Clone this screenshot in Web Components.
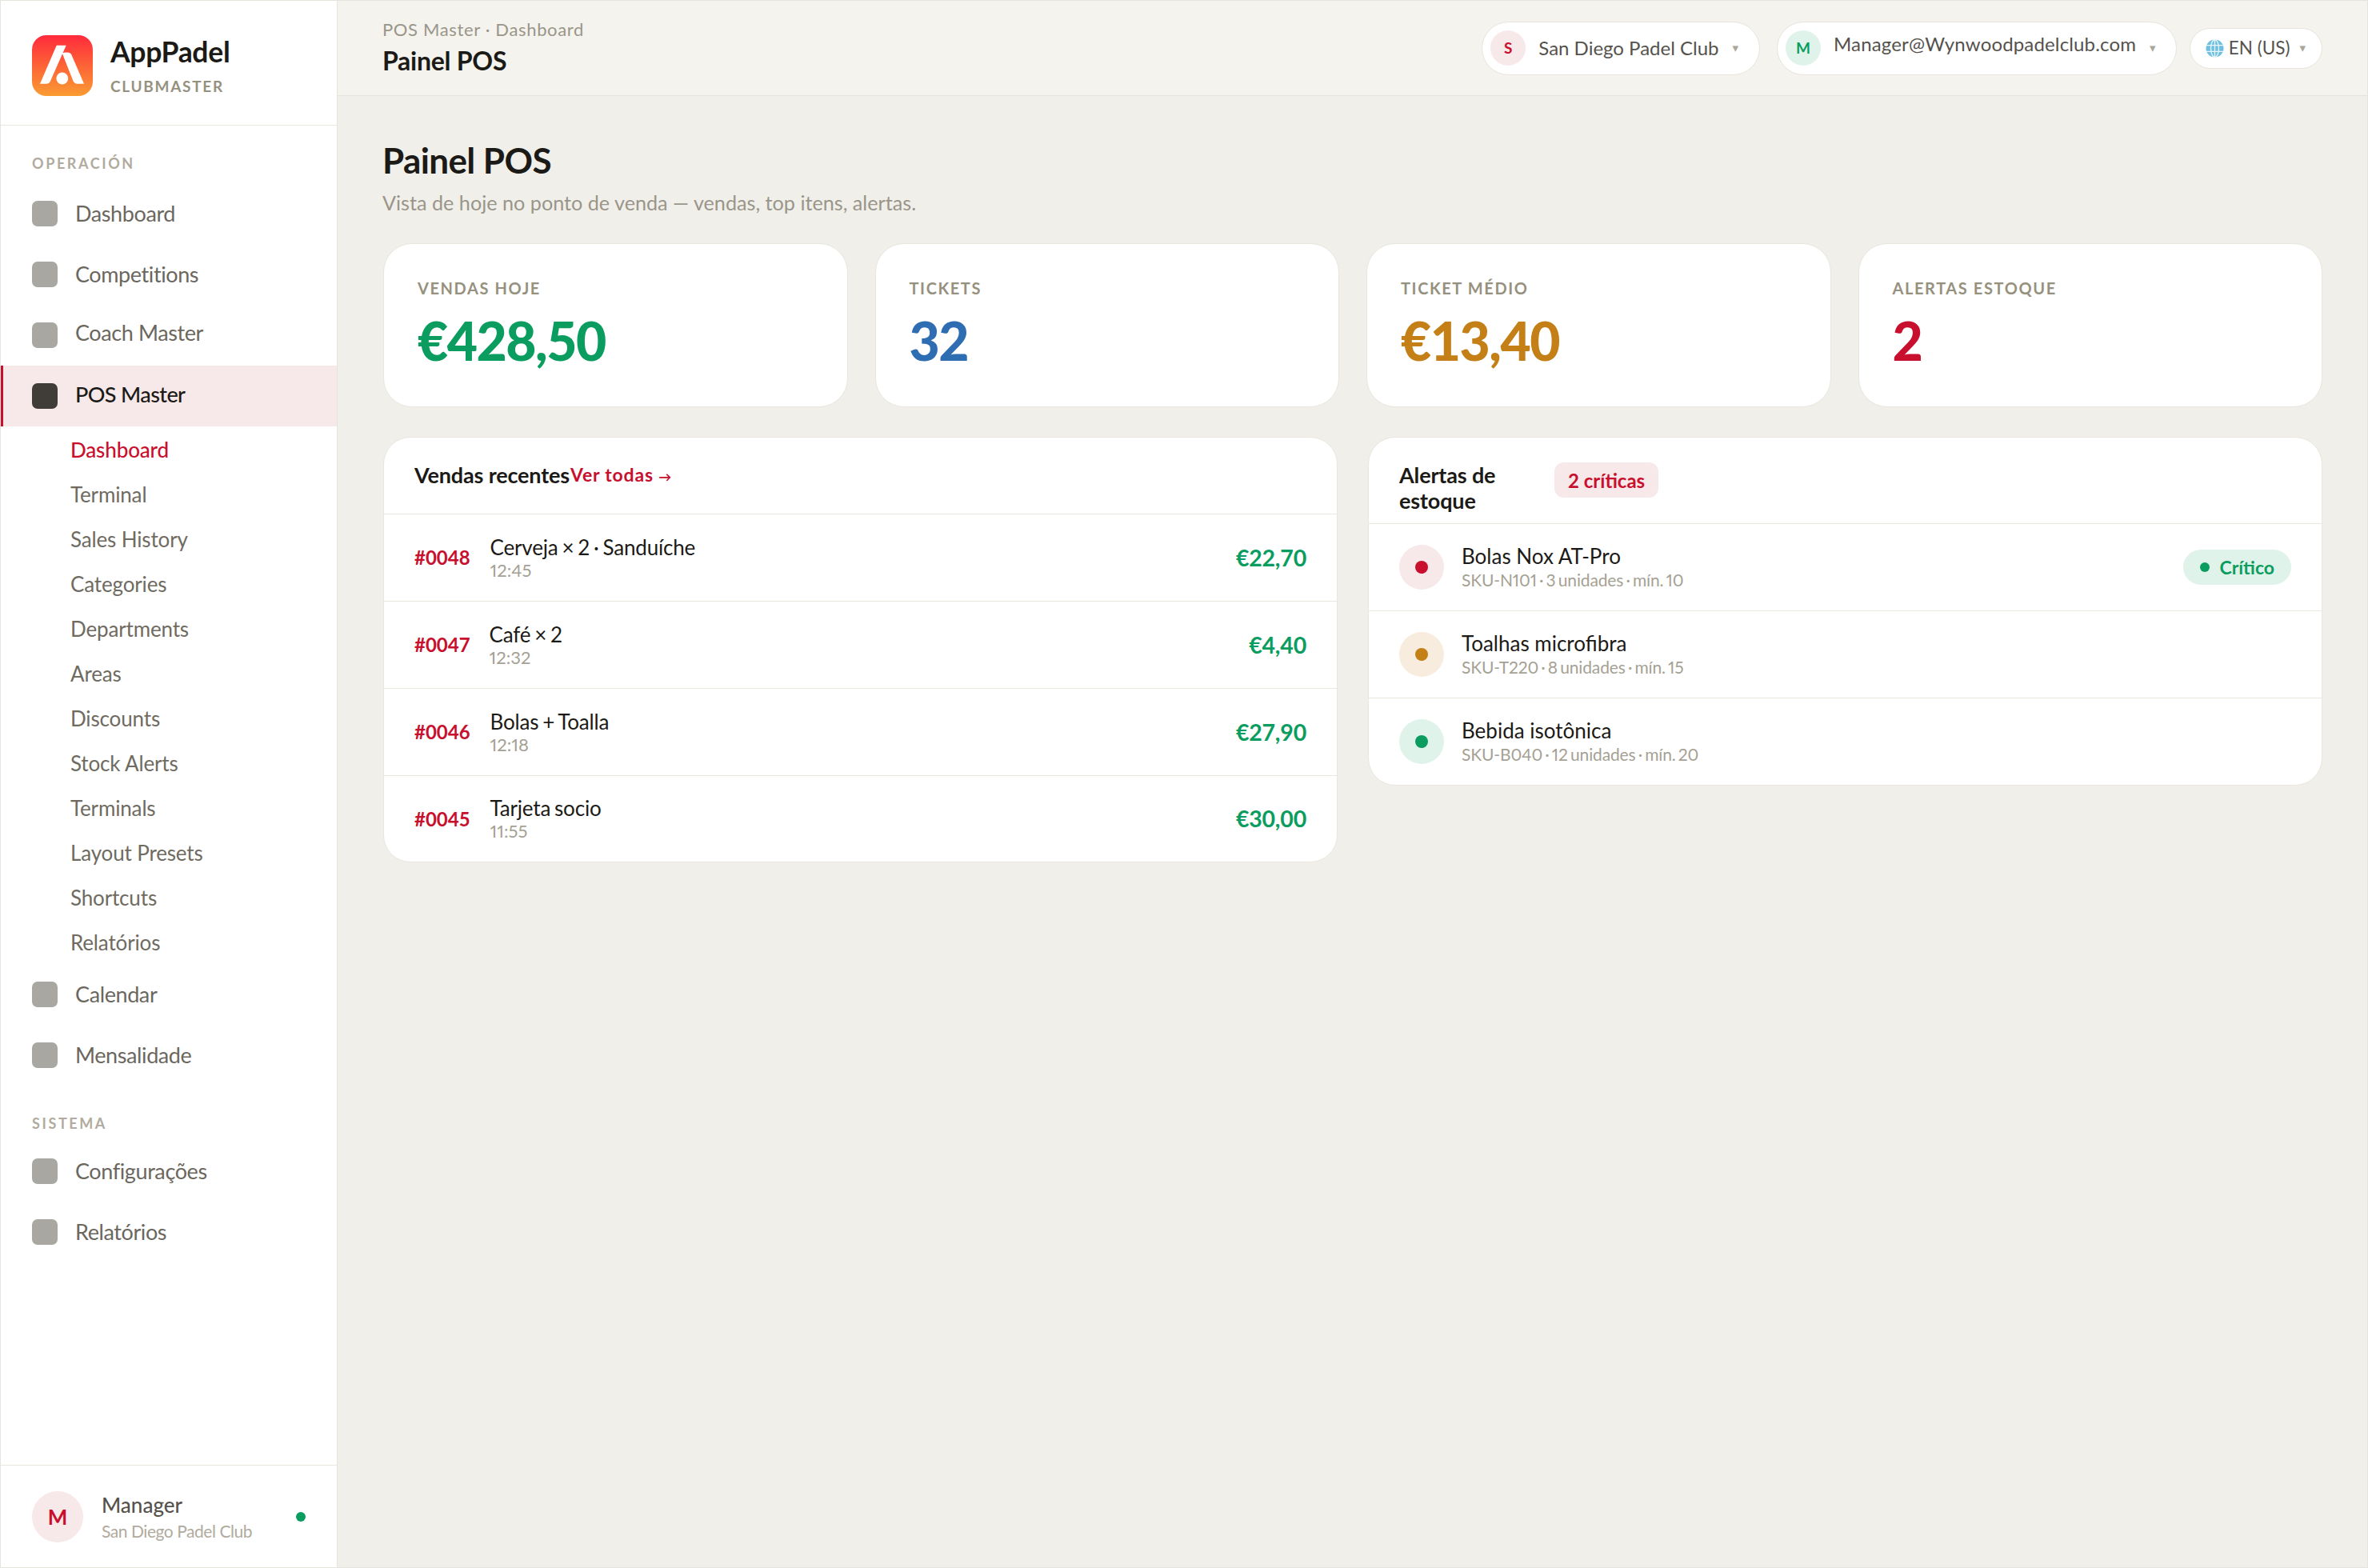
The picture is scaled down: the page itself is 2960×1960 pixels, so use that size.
<!DOCTYPE html>
<html lang="pt">
<head>
<meta charset="utf-8">
<title>Painel POS</title>
<style>
html,body{margin:0;padding:0;background:#f0efea;}
body{font-family:"Lato","Liberation Sans",sans-serif;color:#1c1a17;}
</style>
</head>
<body>
<script>
function def(name, css, html, extra){
  const tpl=document.createElement('template');
  tpl.innerHTML='<style>'+css+'</style>'+html;
  customElements.define(name,class extends HTMLElement{
    constructor(){super();this.attachShadow({mode:'open'}).appendChild(tpl.content.cloneNode(true));}
    connectedCallback(){ if(extra) extra(this,this.shadowRoot); }
  });
}

def('app-shell',`:host{display:grid;grid-template-columns:421px 1fr;width:2960px;height:1960px;box-sizing:border-box;border:1px solid #e6e4dc;background:#f0efea;overflow:hidden}
.col{display:flex;flex-direction:column;min-width:0}`,`<slot name="side"></slot><div class="col"><slot name="top"></slot><slot name="main"></slot></div>`);

def('side-bar',`:host{display:flex;flex-direction:column;background:#fff;border-right:1px solid #e6e4dc;height:1958px;box-sizing:content-box;width:420px}
.spacer{flex:1}`,`<slot name="brand"></slot><slot></slot><div class="spacer"></div><slot name="foot"></slot>`);

def('brand-block',`:host{display:flex;align-items:center;gap:22px;height:148px;box-sizing:content-box;padding:7px 0 0 39px;border-bottom:1px solid #e9e7e0}
svg{display:block;width:76px;height:76px;flex:none}
.t{display:flex;flex-direction:column}
.a{font-size:35.5px;font-weight:700;line-height:44px;letter-spacing:-.3px;color:#1c1a17}
.b{font-size:19px;font-weight:700;line-height:26px;letter-spacing:1.7px;color:#96917f;margin-top:8px}`,
`<svg viewBox="0 0 76 76"><defs><linearGradient id="g" x1="0" y1="0" x2="0" y2="1"><stop offset="0" stop-color="#ff2a3c"/><stop offset="1" stop-color="#fa9c32"/></linearGradient></defs>
<rect width="76" height="76" rx="18" fill="url(#g)"/>
<path d="M30.7 12.7H42.7L22.9 57.4Q21.4 60.7 17.6 60.7H10Z" fill="#fff"/>
<path d="M37.7 22.4Q40 21.4 44 21.5Q48 21.7 49.4 24.6L65 60.7H56.6Q53 60.7 51.6 57.6Z" fill="#fff"/>
<circle cx="37.8" cy="54" r="7.4" fill="#fff"/></svg>
<div class="t"><div class="a">AppPadel</div><div class="b">CLUBMASTER</div></div>`);

def('nav-label',`:host{display:block;box-sizing:border-box;padding:35px 0 var(--mb,13px) 39px;font-size:18px;font-weight:700;line-height:24px;letter-spacing:2.6px;color:#b0ab9e}`,`<slot></slot>`);

def('nav-item',`:host{display:flex;align-items:center;height:76px;box-sizing:border-box;padding-left:39px;font-size:27px;letter-spacing:-.4px;line-height:36px;color:#6b675e}
.i{width:32px;height:32px;border-radius:7px;background:#a9a7a1;flex:none;margin-right:22px}
.x{display:block;margin-bottom:var(--lift,0px)}
:host([active]){background:#f7e8e9;color:#1c1a17;font-weight:500;letter-spacing:-.6px;border-left:3px solid #c8102e;padding-left:36px;--lift:4px}
:host([active]) .i{background:#403c37}`,`<span class="i"></span><span class="x"><slot></slot></span>`);

def('sub-item',`:host{display:flex;align-items:center;height:56px;box-sizing:border-box;padding:2px 0 0 87px;font-size:26px;letter-spacing:-.15px;color:#6f6b61;line-height:34px}
:host([active]){color:#c8102e;font-weight:500}`,`<slot></slot>`);

def('user-foot',`:host{display:flex;align-items:center;height:127px;box-sizing:content-box;border-top:1px solid #e9e7e0;padding:0 39px 0 39px}
.av{width:64px;height:64px;border-radius:50%;background:#f7e8e9;color:#c8102e;font-weight:700;font-size:26px;display:flex;align-items:center;justify-content:center;flex:none;margin-right:23px}
.t{flex:1}
.n{font-size:26px;font-weight:500;line-height:34px;color:#55524d}
.s{font-size:21px;letter-spacing:-.45px;line-height:28px;color:#b0ab9e;margin-top:2px}
.d{width:12px;height:12px;border-radius:50%;background:#0a9d5f;flex:none}`,
`<div class="av">M</div><div class="t"><div class="n">Manager</div><div class="s">San Diego Padel Club</div></div><div class="d"></div>`);

def('top-bar',`:host{display:flex;align-items:center;justify-content:space-between;height:118px;box-sizing:content-box;background:#f4f3ee;border-bottom:1px solid #e6e4dc;padding:0 56px}
.c{font-size:22px;line-height:28px;color:#9a9589;letter-spacing:.65px}
.h{font-size:32px;line-height:42px;font-weight:700;color:#1c1a17;margin-top:4px;letter-spacing:-.25px}
.r{display:flex;align-items:center;gap:21px}`,
`<div><div class="c"><slot name="crumb"></slot></div><div class="h"><slot name="title"></slot></div></div><div class="r"><slot></slot></div>`);

def('top-pill',`:host{display:flex;align-items:center;height:67px;box-sizing:border-box;background:#fff;border:1px solid #e6e4dc;border-radius:34px;padding:0 10px;font-size:var(--fs,24px);letter-spacing:var(--ls,0);color:#55524d;line-height:30px}
:host([small]){height:51px;border-radius:26px;padding:0 12px 0 19px;margin-left:-5px}
.av{width:44px;height:44px;border-radius:50%;flex:none;display:flex;align-items:center;justify-content:center;font-size:19px;font-weight:700;letter-spacing:0;background:var(--abg);color:var(--afg);margin-right:16px}
.t{margin-bottom:var(--lift,0px);white-space:nowrap}
.ar{font-family:"DejaVu Sans",sans-serif;font-size:15px;color:#aaa699;margin:0 var(--arm,10px) 0 var(--arl,18px)}
slot[name=icon]{display:contents}`,
`<slot name="icon"></slot><span class="t"><slot></slot></span><span class="ar">▾</span>`,
(el,sr)=>{ if(el.hasAttribute('letter')){const d=document.createElement('div');d.className='av';d.textContent=el.getAttribute('letter');sr.insertBefore(d,sr.querySelector('slot[name=icon]'));}});

def('page-main',`:host{display:block;flex:1;box-sizing:border-box;padding:52px 56px 0 57px;background:#f0efea}
.h{font-size:44px;line-height:56px;font-weight:700;color:#1c1a17;letter-spacing:-.6px;margin-left:-1px}
.s{font-size:25.2px;line-height:32px;color:#9a9589;margin:9px 0 35px -1px}
.stats{display:grid;grid-template-columns:repeat(4,1fr);gap:34px;margin-bottom:37px}
.pan{display:grid;grid-template-columns:repeat(2,1fr);gap:38px;align-items:start}`,
`<div class="h"><slot name="h"></slot></div><div class="s"><slot name="s"></slot></div><div class="stats"><slot name="stat"></slot></div><div class="pan"><slot name="panel"></slot></div>`);

def('stat-card',`:host{display:block;height:205px;box-sizing:border-box;background:#fff;border:1px solid #e8e6de;border-radius:36px;padding:42px 42px 0 42px}
.l{font-size:20px;font-weight:700;line-height:26px;letter-spacing:1.6px;color:#96917f}
.v{font-size:66px;font-weight:900;line-height:70px;letter-spacing:-1.5px;margin-top:18px;color:var(--c)}`,
`<div class="l"></div><div class="v"></div>`,
(el,sr)=>{sr.querySelector('.l').textContent=el.getAttribute('label');sr.querySelector('.v').textContent=el.getAttribute('value');});

def('data-panel',`:host{display:block;background:#fff;border:1px solid #e8e6de;border-radius:34px;overflow:hidden}
.hd{display:flex;align-items:flex-start;box-sizing:border-box;padding:31px 38px 0 38px;height:var(--hh,96px);border-bottom:1px solid #e9e7e0}`,
`<div class="hd"><slot name="head"></slot></div><slot></slot>`);

def('panel-title',`:host{display:block;font-size:27px;font-weight:700;line-height:32px;color:#1c1a17;letter-spacing:-.15px}`,`<slot></slot>`);
def('panel-link',`:host{display:block;font-size:23px;font-weight:700;line-height:31px;color:#c8102e;letter-spacing:.8px;margin-left:1px}`,`<slot></slot>`);
def('crit-badge',`:host{display:flex;align-items:center;height:44px;box-sizing:border-box;padding:0 17px;border-radius:12px;background:#f7e8e9;color:#c8102e;font-size:24px;font-weight:700;white-space:nowrap}`,`<slot></slot>`);

def('sale-row',`:host{display:flex;align-items:center;height:109px;box-sizing:border-box;padding:0 38px;border-bottom:1px solid #e9e7e0}
:host([last]){border-bottom:0;height:107px}
.id{font-size:24px;font-weight:700;color:#c8102e;margin:0 var(--idm,25px) 1px 0}
.m{flex:1;margin-top:1px}
.n{font-size:26px;letter-spacing:-.2px;word-spacing:-1.5px;line-height:30px;color:#1c1a17}
.t{font-size:22px;line-height:28px;color:#a5a194;font-variant-numeric:proportional-nums}
.a{font-size:28.5px;font-weight:700;color:#0a9d5f;letter-spacing:-.2px;margin-bottom:1px}`,
`<span class="id"></span><div class="m"><div class="n"></div><div class="t"></div></div><span class="a"></span>`,
(el,sr)=>{sr.querySelector('.id').textContent=el.getAttribute('no');sr.querySelector('.n').textContent=el.getAttribute('name');sr.querySelector('.t').textContent=el.getAttribute('time');sr.querySelector('.a').textContent=el.getAttribute('amount');});

def('alert-row',`:host{display:flex;align-items:center;height:109px;box-sizing:border-box;padding:0 38px;border-bottom:1px solid #e9e7e0}
:host([last]){border-bottom:0;height:108px}
.ic{width:56px;height:56px;border-radius:50%;background:var(--bg);display:flex;align-items:center;justify-content:center;flex:none;margin-right:22px}
.ic i{display:block;width:16px;height:16px;border-radius:50%;background:var(--fg)}
.m{flex:1}
.n{font-size:26px;line-height:30px;color:#1c1a17}
.s{font-size:21px;letter-spacing:-.15px;word-spacing:-2px;line-height:28px;color:#a5a194;margin-top:1px;font-variant-numeric:proportional-nums}`,
`<div class="ic"><i></i></div><div class="m"><div class="n"></div><div class="s"></div></div><slot></slot>`,
(el,sr)=>{sr.querySelector('.n').textContent=el.getAttribute('name');sr.querySelector('.s').textContent=el.getAttribute('sub');});

def('status-chip',`:host{display:flex;align-items:center;height:44px;box-sizing:border-box;padding:0 21px;border-radius:22px;background:#e0f3ea;color:#0a9d5f;font-size:23px;font-weight:700}
i{display:block;width:12px;height:12px;border-radius:50%;background:#0a9d5f;margin-right:12px}`,`<i></i><slot></slot>`);
</script>

<app-shell>
  <side-bar slot="side">
    <brand-block slot="brand"></brand-block>
    <nav-label>OPERACIÓN</nav-label>
    <nav-item>Dashboard</nav-item>
    <nav-item>Competitions</nav-item>
    <nav-item style="--lift:7px">Coach Master</nav-item>
    <nav-item active>POS Master</nav-item>
    <sub-item active>Dashboard</sub-item>
    <sub-item>Terminal</sub-item>
    <sub-item>Sales History</sub-item>
    <sub-item>Categories</sub-item>
    <sub-item>Departments</sub-item>
    <sub-item>Areas</sub-item>
    <sub-item>Discounts</sub-item>
    <sub-item>Stock Alerts</sub-item>
    <sub-item>Terminals</sub-item>
    <sub-item>Layout Presets</sub-item>
    <sub-item>Shortcuts</sub-item>
    <sub-item>Relatórios</sub-item>
    <nav-item>Calendar</nav-item>
    <nav-item>Mensalidade</nav-item>
    <nav-label style="--mb:10px">SISTEMA</nav-label>
    <nav-item>Configurações</nav-item>
    <nav-item>Relatórios</nav-item>
    <user-foot slot="foot"></user-foot>
  </side-bar>

  <top-bar slot="top">
    <span slot="crumb">POS Master · Dashboard</span>
    <span slot="title">Painel POS</span>
    <top-pill letter="S" style="--abg:#f7e8e9;--afg:#c8102e;--arl:17px;--arm:16px">San Diego Padel Club</top-pill>
    <top-pill letter="M" style="--abg:#e0f3ea;--afg:#0a9d5f;--lift:10px;--ls:.15px;--arl:17px;--arm:15px">Manager@Wynwoodpadelclub.com</top-pill>
    <top-pill small style="--fs:22.5px;--arl:12px;--arm:8px">
      <svg slot="icon" width="23" height="23" viewBox="0 0 24 24" style="margin-right:6px;flex:none">
        <circle cx="12" cy="12" r="11.5" fill="#6fbfe0"/>
        <g fill="none" stroke="#e8f6fb" stroke-width="1.4">
          <ellipse cx="12" cy="12" rx="5.2" ry="11.5"/><path d="M12 .5V23.5M1 8H23M1 16H23"/>
        </g>
      </svg>
      EN (US)
    </top-pill>
  </top-bar>

  <page-main slot="main">
    <span slot="h">Painel POS</span>
    <span slot="s">Vista de hoje no ponto de venda — vendas, top itens, alertas.</span>
    <stat-card slot="stat" label="VENDAS HOJE" value="€428,50" style="--c:#0a9d5f"></stat-card>
    <stat-card slot="stat" label="TICKETS" value="32" style="--c:#2f6db3"></stat-card>
    <stat-card slot="stat" label="TICKET MÉDIO" value="€13,40" style="--c:#c47f17"></stat-card>
    <stat-card slot="stat" label="ALERTAS ESTOQUE" value="2" style="--c:#c8102e"></stat-card>

    <data-panel slot="panel">
      <panel-title slot="head">Vendas recentes</panel-title>
      <panel-link slot="head">Ver todas <span style="font-size:16px;letter-spacing:0">→</span></panel-link>
      <sale-row no="#0048" name="Cerveja × 2 · Sanduíche" time="12:45" amount="€22,70"></sale-row>
      <sale-row no="#0047" name="Café × 2" time="12:32" amount="€4,40" style="--idm:24px"></sale-row>
      <sale-row no="#0046" name="Bolas + Toalla" time="12:18" amount="€27,90"></sale-row>
      <sale-row last no="#0045" name="Tarjeta socio" time="11:55" amount="€30,00"></sale-row>
    </data-panel>

    <data-panel slot="panel" style="--hh:108px">
      <panel-title slot="head" style="width:194px">Alertas de estoque</panel-title>
      <crit-badge slot="head">2 críticas</crit-badge>
      <alert-row name="Bolas Nox AT-Pro" sub="SKU-N101 · 3 unidades · mín. 10" style="--bg:#f7e8e9;--fg:#c8102e"><status-chip>Crítico</status-chip></alert-row>
      <alert-row name="Toalhas microfibra" sub="SKU-T220 · 8 unidades · mín. 15" style="--bg:#f7ecdd;--fg:#c47f17"></alert-row>
      <alert-row last name="Bebida isotônica" sub="SKU-B040 · 12 unidades · mín. 20" style="--bg:#e0f3ea;--fg:#0a9d5f"></alert-row>
    </data-panel>
  </page-main>
</app-shell>
</body>
</html>
